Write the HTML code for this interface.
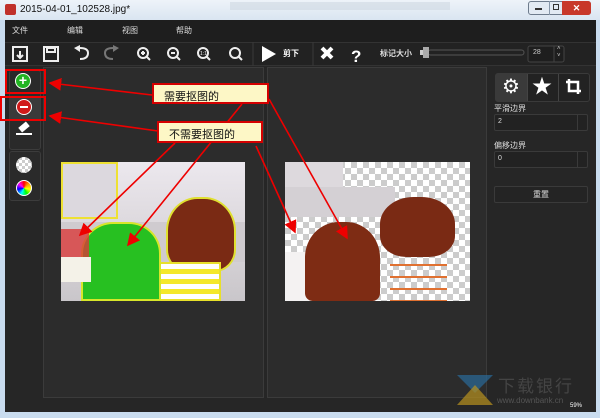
<!DOCTYPE html>
<html><head><meta charset="utf-8"><style>
*{margin:0;padding:0;box-sizing:border-box}
body{width:600px;height:418px;overflow:hidden;background:#c9dcef;font-family:"Liberation Sans","Noto Sans CJK SC",sans-serif;position:relative}
.a{position:absolute}
.t{color:#ddd;font-size:8px}
.chk{background-color:#fff;background-image:linear-gradient(45deg,#ccc 25%,transparent 25%,transparent 75%,#ccc 75%),linear-gradient(45deg,#ccc 25%,transparent 25%,transparent 75%,#ccc 75%);background-size:12px 12px;background-position:0 0,6px 6px}
.lbl{background:#fdf7c6;border:2px solid #d40000;font-size:11px;color:#111;padding:3px 10px}
.btn{background:#2a2a2a;border:1px solid #3c3c3c;border-radius:3px}
</style></head><body>
<div class="a" style="left:0;top:0;width:600px;height:20px;background:linear-gradient(#eef3f9,#dae5f1)"></div>
<div class="a" style="left:5px;top:4px;width:11px;height:11px;background:#c0302a;border-radius:2px"></div>
<div class="a" style="left:20px;top:4px;font-size:10px;color:#111">2015-04-01_102528.jpg*</div>
<div class="a" style="left:230px;top:2px;width:220px;height:8px;background:#c9d3de;opacity:.5"></div>
<div class="a" style="left:528px;top:1px;width:63px;height:14px;border:1px solid #6d7b8c;border-radius:3px;background:#e2eaf3"></div>
<div class="a" style="left:549px;top:1px;width:1px;height:14px;background:#8898aa"></div>
<div class="a" style="left:562px;top:1px;width:29px;height:14px;background:#c8382a;border-radius:0 3px 3px 0;color:#fff;font-size:9px;font-weight:bold;text-align:center;line-height:14px">✕</div>
<div class="a" style="left:535px;top:8px;width:7px;height:2px;background:#333"></div>
<div class="a" style="left:553px;top:4px;width:6px;height:6px;border:1px solid #333"></div>
<div class="a" style="left:5px;top:20px;width:591px;height:392px;background:#262626"></div>
<div class="a" style="left:5px;top:20px;width:591px;height:22px;background:#1e1e1e"></div>
<div class="a t" style="left:12px;top:25px">文件</div>
<div class="a t" style="left:67px;top:25px">编辑</div>
<div class="a t" style="left:122px;top:25px">视图</div>
<div class="a t" style="left:176px;top:25px">帮助</div>
<div class="a" style="left:5px;top:42px;width:591px;height:24px;background:#222;border-top:1px solid #333;border-bottom:1px solid #333"></div>
<svg class="a" style="left:0;top:42px" width="600" height="24" viewBox="0 42 600 24">
<g fill="none" stroke="#eee" stroke-width="2">
<rect x="13" y="47" width="14" height="14"/><path d="M20 51v7M17 55l3 3 3-3"/>
<rect x="44" y="47" width="14" height="14"/><rect x="47" y="48" width="8" height="4"/>
<path d="M80 59q8 0 8-6q0-5-8-5h-3"/>
<path d="M113 59q-8 0-8-6q0-5 8-5h3" stroke="#777"/>
<circle cx="143" cy="53" r="5"/><path d="M147 57l3 3M141 53h4M143 51v4"/>
<circle cx="173" cy="53" r="5"/><path d="M177 57l3 3M171 53h4"/>
<circle cx="203" cy="53" r="5"/><path d="M207 57l3 3"/>
<circle cx="235" cy="53" r="5"/><path d="M239 57l3 3"/>
</g>
<polygon points="80,45 74,48 80,52" fill="#eee"/><polygon points="113,45 119,48 113,52" fill="#777"/>
<text x="200" y="55" font-size="5" fill="#eee" font-family="Liberation Sans">1:1</text>
<line x1="253" y1="42" x2="253" y2="66" stroke="#3a3a3a"/>
<polygon points="262,46 262,62 276,54" fill="#fff"/>
<line x1="313" y1="42" x2="313" y2="66" stroke="#3a3a3a"/>
<path d="M322 48l10 10M332 48l-10 10" stroke="#fff" stroke-width="4"/>
<text x="351" y="62" font-size="17" font-weight="bold" fill="#fff" font-family="Liberation Sans">?</text>
<rect x="428" y="50" width="96" height="5" rx="2.5" fill="none" stroke="#555"/>
<rect x="420" y="50" width="6" height="5" fill="#ccc"/>
<rect x="423" y="47" width="6" height="11" fill="#aaa"/>
<rect x="528" y="46" width="36" height="16" rx="2" fill="#1e1e1e" stroke="#444"/>
<line x1="554" y1="46" x2="554" y2="62" stroke="#444"/>
</svg>
<div class="a" style="left:283px;top:48px;font-size:8px;color:#fff;font-weight:bold">剪下</div>
<div class="a" style="left:380px;top:48px;font-size:8px;color:#ddd;font-weight:bold">标记大小</div>
<div class="a" style="left:533px;top:49px;font-size:7px;color:#ccc">28</div>
<div class="a" style="left:557px;top:46px;font-size:6px;color:#ccc;line-height:7px">˄<br>˅</div>
<div class="a btn" style="left:9px;top:70px;width:32px;height:80px"></div>
<div class="a btn" style="left:9px;top:151px;width:32px;height:50px"></div>
<div class="a" style="left:10px;top:97px;width:30px;height:22px;background:#3a3a3a"></div>
<div class="a" style="left:15px;top:73px;width:16px;height:16px;border-radius:50%;background:#22b422;border:1.5px solid #fff;color:#fff;font-size:14px;font-weight:bold;line-height:12px;text-align:center">+</div>
<div class="a" style="left:16px;top:99px;width:16px;height:16px;border-radius:50%;background:#d01a1a;border:1.5px solid #fff"></div>
<div class="a" style="left:20px;top:106px;width:8px;height:2px;background:#fff"></div>
<div class="a" style="left:19px;top:124px;width:10px;height:6px;background:#fff;transform:rotate(-40deg)"></div>
<div class="a" style="left:16px;top:133px;width:16px;height:1.5px;background:#fff"></div>
<div class="a chk" style="left:16px;top:157px;width:16px;height:16px;border-radius:50%;background-size:6px 6px;background-position:0 0,3px 3px"></div>
<div class="a" style="left:16px;top:180px;width:16px;height:16px;border-radius:50%;border:1.5px solid #fff;background:conic-gradient(red,orange,yellow,lime,cyan,blue,magenta,red)"></div>
<div class="a" style="left:43px;top:67px;width:221px;height:331px;background:#2c2c2c;border:1px solid #3b3b3b"></div>
<div class="a" style="left:267px;top:67px;width:220px;height:331px;background:#2c2c2c;border:1px solid #3b3b3b"></div>
<div class="a" style="left:61px;top:162px;width:184px;height:139px;background:linear-gradient(#ece8ee,#d8d4d8 60%,#c9c6ca);overflow:hidden">
 <div class="a" style="left:0;top:0;width:57px;height:57px;border:2px solid #eee133;background:#dcd8de"></div>
 <div class="a" style="left:0;top:60px;width:184px;height:40px;background:#cfcbcf"></div>
 <div class="a" style="left:105px;top:35px;width:70px;height:75px;background:#7a2a14;border-radius:45% 45% 30% 30%;border:2px solid #e0e030"></div>
 <div class="a" style="left:95px;top:100px;width:65px;height:39px;background:repeating-linear-gradient(#fff 0 5px,#f4e829 5px 10px);border:2px solid #e8e02a"></div>
 <div class="a" style="left:20px;top:60px;width:80px;height:79px;background:#27c021;border-radius:40% 40% 0 0;border:2px solid #d7e62a"></div>
 <div class="a" style="left:0;top:67px;width:28px;height:30px;background:#d83a3a;opacity:.8"></div>
 <div class="a" style="left:0;top:95px;width:30px;height:25px;background:#f4f2e8"></div>
</div>
<div class="a chk" style="left:285px;top:162px;width:185px;height:139px;overflow:hidden">
 <div class="a" style="left:0;top:0;width:58px;height:50px;background:#ddd9dd"></div>
 <div class="a" style="left:0;top:25px;width:110px;height:30px;background:#d4d0d4"></div>
 <div class="a" style="left:0;top:90px;width:35px;height:49px;background:#f4f2f2"></div>
 <div class="a" style="left:95px;top:35px;width:75px;height:60px;background:#7a2a14;border-radius:45% 45% 35% 35%"></div>
 <div class="a" style="left:105px;top:92px;width:57px;height:47px;background:repeating-linear-gradient(transparent 0 10px,#e07030 10px 12px);"></div>
 <div class="a" style="left:20px;top:60px;width:75px;height:79px;background:#7e2c14;border-radius:45% 45% 10% 10%"></div>
</div>
<div class="a" style="left:495px;top:73px;width:95px;height:29px;background:#222;border:1px solid #3a3a3a;border-radius:3px"></div>
<div class="a" style="left:496px;top:74px;width:31px;height:27px;background:#3a3a3a"></div>
<div class="a" style="left:527px;top:74px;width:1px;height:27px;background:#444"></div>
<div class="a" style="left:558px;top:74px;width:1px;height:27px;background:#444"></div>
<div class="a" style="left:502px;top:74px;font-size:20px;color:#fff;line-height:26px">⚙</div>
<div class="a" style="left:532px;top:74px;font-size:20px;color:#fff;line-height:26px">★</div>
<svg class="a" style="left:564px;top:77px" width="20" height="20"><path d="M5 2v12h12M2 5h12v12" fill="none" stroke="#fff" stroke-width="2.5"/></svg>
<div class="a t" style="left:494px;top:103px">平滑边界</div>
<div class="a" style="left:494px;top:114px;width:94px;height:17px;background:#222;border:1px solid #3a3a3a;border-radius:2px"></div>
<div class="a" style="left:577px;top:114px;width:1px;height:17px;background:#3a3a3a"></div>
<div class="a t" style="left:498px;top:118px;font-size:7px">2</div>
<div class="a t" style="left:494px;top:140px">偏移边界</div>
<div class="a" style="left:494px;top:151px;width:94px;height:17px;background:#222;border:1px solid #3a3a3a;border-radius:2px"></div>
<div class="a" style="left:577px;top:151px;width:1px;height:17px;background:#3a3a3a"></div>
<div class="a t" style="left:498px;top:155px;font-size:7px">0</div>
<div class="a" style="left:494px;top:186px;width:94px;height:17px;background:#242424;border:1px solid #3a3a3a;border-radius:2px;color:#ddd;font-size:8px;text-align:center;line-height:15px">重置</div>
<svg class="a" style="left:455px;top:373px" width="40" height="34"><polygon points="2,2 38,2 20,20" fill="#2a6a98" opacity=".7"/><polygon points="20,12 38,32 2,32" fill="#b8921e" opacity=".7"/></svg>
<div class="a" style="left:498px;top:372px;font-size:17px;color:#444;letter-spacing:2px">下载银行</div>
<div class="a" style="left:497px;top:396px;font-size:8px;color:#555">www.downbank.cn</div>
<div class="a" style="left:570px;top:403px;font-size:6px;color:#fff">59%</div>
<div class="a" style="left:5px;top:69px;width:41px;height:25px;border:2px solid #e00"></div>
<div class="a" style="left:0px;top:96px;width:46px;height:25px;border:2px solid #e00"></div>
<svg class="a" style="left:0;top:0" width="600" height="418">
<defs><marker id="m" markerWidth="8" markerHeight="8" refX="7" refY="4" orient="auto"><path d="M0,0L8,4L0,8z" fill="#e00"/></marker></defs>
<g stroke="#e00" stroke-width="1.6" fill="none" marker-end="url(#m)">
<line x1="152" y1="95" x2="50" y2="83"/>
<line x1="158" y1="131" x2="50" y2="116"/>
<line x1="242" y1="104" x2="128" y2="245"/>
<line x1="175" y1="143" x2="80" y2="235"/>
<line x1="269" y1="99" x2="347" y2="238"/>
<line x1="256" y1="146" x2="295" y2="232"/>
</g></svg>
<div class="a lbl" style="left:152px;top:83px;width:117px;height:21px">需要抠图的</div>
<div class="a lbl" style="left:157px;top:121px;width:106px;height:22px">不需要抠图的</div>
</body></html>
